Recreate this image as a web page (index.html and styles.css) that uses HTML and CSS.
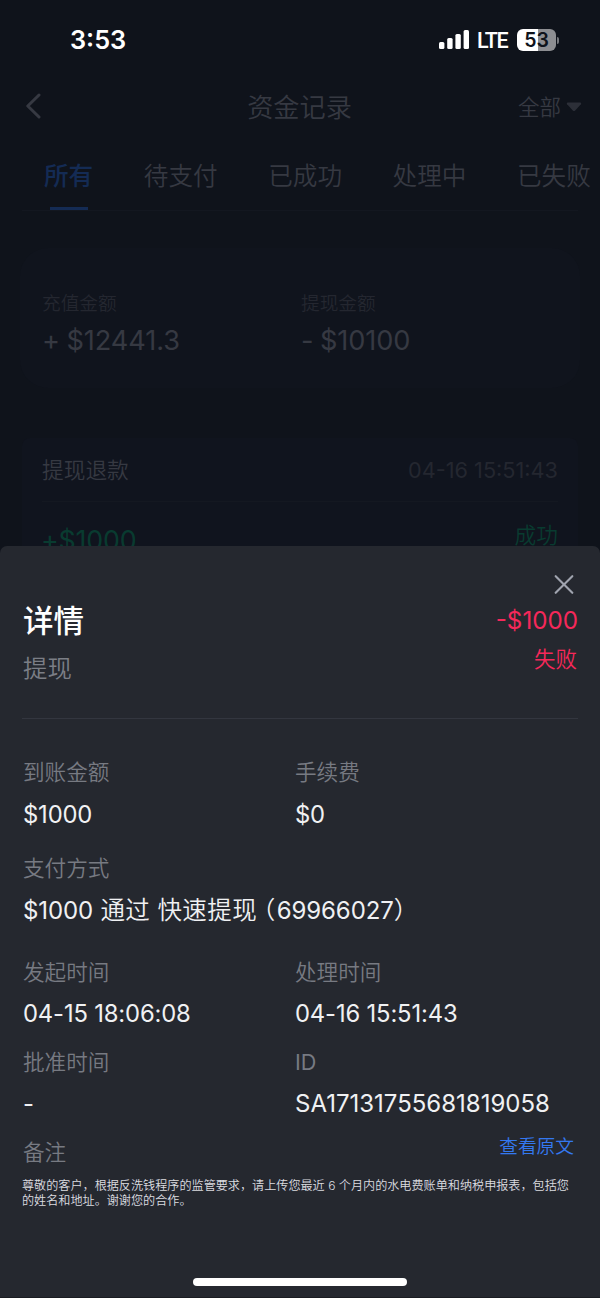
FILE: index.html
```html
<!DOCTYPE html>
<html lang="zh-CN">
<head>
  <meta charset="UTF-8">
  <meta name="viewport" content="width=device-width, initial-scale=1.0">
  <title>资金记录</title>
  <link rel="stylesheet" href="styles.css">
</head>
<body>

<div class="status-bar">
  <span class="time">3:53</span>
  <div class="status-icons">
    <svg class="signal" width="30" height="20" viewBox="0 0 30 20" fill="#fff">
      <rect x="0" y="12" width="5.4" height="7" rx="1.5"/>
      <rect x="8.2" y="8" width="5.4" height="11" rx="1.5"/>
      <rect x="16.4" y="4" width="5.4" height="15" rx="1.5"/>
      <rect x="24.6" y="0" width="5.4" height="19" rx="1.5"/>
    </svg>
    <span class="network">LTE</span>
    <span class="battery">53</span>
    <span class="battery-tip"></span>
  </div>
</div>

<div class="page">
  <div class="nav">
    <svg width="17" height="26" viewBox="0 0 17 26" fill="none" stroke="#363942" stroke-width="3" stroke-linecap="round" stroke-linejoin="round">
      <path d="M15 2L3.8 13L15 24"/>
    </svg>
    <h1>资金记录</h1>
    <div class="filter">全部
      <svg width="16" height="10" viewBox="0 0 16 10" fill="#2c2f38"><path d="M1.8 0.5H14.2Q16 0.7 14.9 2.2L9.2 8.6Q8 9.6 6.8 8.6L1.1 2.2Q0 0.7 1.8 0.5Z"/></svg>
    </div>
  </div>

  <div class="tabs">
    <span class="tab active">所有</span>
    <span class="tab">待支付</span>
    <span class="tab">已成功</span>
    <span class="tab">处理中</span>
    <span class="tab">已失败</span>
  </div>

  <div class="summary">
    <div>
      <p class="summary-label">充值金额</p>
      <p class="summary-value">+ $12441.3</p>
    </div>
    <div>
      <p class="summary-label">提现金额</p>
      <p class="summary-value">- $10100</p>
    </div>
  </div>

  <div class="record">
    <div class="record-head">
      <span>提现退款</span>
      <span class="record-time">04-16 15:51:43</span>
    </div>
    <div class="record-body">
      <span class="record-amount">+$1000</span>
      <span class="record-status">成功</span>
    </div>
  </div>
</div>

<div class="sheet">
  <div class="close">
    <svg width="20" height="20" viewBox="0 0 20 20" fill="none" stroke="#a0a4af" stroke-width="2.1" stroke-linecap="round"><path d="M1.7 1.2L18.3 17.8M18.3 1.2L1.7 17.8"/></svg>
  </div>
  <div class="sheet-head">
    <div>
      <h2>详情</h2>
      <p class="type">提现</p>
    </div>
    <div class="result">
      <p class="amount">-$1000</p>
      <p class="state">失败</p>
    </div>
  </div>

  <div class="row row-amount">
    <div>
      <p class="label">到账金额</p>
      <p class="value">$1000</p>
    </div>
    <div>
      <p class="label">手续费</p>
      <p class="value">$0</p>
    </div>
  </div>
  <div class="row row-method">
    <div class="full">
      <p class="label">支付方式</p>
      <p class="value method"><span class="num">$1000</span> 通过 快速提现<span class="paren">（</span><span class="num">69966027</span><span class="paren-close">）</span></p>
    </div>
  </div>
  <div class="row row-time">
    <div>
      <p class="label">发起时间</p>
      <p class="value">04-15 18:06:08</p>
    </div>
    <div>
      <p class="label">处理时间</p>
      <p class="value">04-16 15:51:43</p>
    </div>
  </div>
  <div class="row row-id">
    <div>
      <p class="label">批准时间</p>
      <p class="value">-</p>
    </div>
    <div>
      <p class="label num">ID</p>
      <p class="value id">SA17131755681819058</p>
    </div>
  </div>
  <div class="note-head">
    <p class="label">备注</p>
    <a class="link">查看原文</a>
  </div>
  <p class="note">尊敬的客户，根据反洗钱程序的监管要求，请上传您最近 6 个月内的水电费账单和纳税申报表，包括您的姓名和地址。谢谢您的合作。</p>
  <div class="home-indicator"></div>
</div>

</body>
</html>
```
FILE: styles.css
```css
* {
  box-sizing: border-box;
}

body {
  margin: 0;
  height: 1298px;
  position: relative;
  overflow: hidden;
  background-color: #0f131b;
  color: #363942;
  font-family: Inter, "Noto Sans CJK SC", sans-serif;
  font-weight: 350;
}

h1, h2, p {
  margin: 0;
}

svg {
  display: block;
}

.status-bar {
  height: 80px;
  padding: 0 41px 0 70px;
  display: flex;
  justify-content: space-between;
  align-items: center;
  color: #fff;
}

.time {
  margin-top: -1px;
  font-size: 25.3px;
  font-weight: 600;
}

.status-icons {
  display: flex;
  align-items: center;
}

.network {
  margin-left: 8px;
  width: 32px;
  font-family: Roboto, sans-serif;
  font-size: 21.5px;
  font-weight: 500;
  letter-spacing: -1.3px;
}

.battery {
  margin-left: 8px;
  width: 39px;
  height: 22px;
  line-height: 22px;
  border-radius: 6px;
  background: linear-gradient(to right, #fff 54%, #8d8e92 54%);
  color: #0f131b;
  text-align: center;
  font-size: 19.5px;
  font-weight: 600;
}

.battery-tip {
  margin-left: 1px;
  width: 2px;
  height: 7px;
  border-radius: 0 2px 2px 0;
  background-color: #77797e;
}

.nav {
  height: 54px;
  padding: 0 18px 0 24px;
  display: grid;
  grid-template-columns: 100px 1fr 107px;
  align-items: center;
}

.nav svg {
  margin-top: -2px;
}

.nav h1 {
  margin-top: -2px;
  text-align: center;
  font-size: 26.2px;
  font-weight: 350;
}

.filter {
  margin-top: -3px;
  display: flex;
  align-items: center;
  justify-content: flex-end;
  gap: 5px;
  font-size: 21.5px;
}

.filter svg {
  margin-top: 3px;
}

.tabs {
  height: 77px;
  margin: 0 22px;
  padding-left: 22px;
  display: flex;
  gap: 50.6px;
  border-bottom: 1px solid #131720;
  white-space: nowrap;
}

.tab {
  height: 76px;
  line-height: 84px;
  font-size: 24.6px;
}

.active {
  color: #142b54;
  font-weight: 500;
  display: flex;
  flex-direction: column;
  align-items: center;
}

.active::after {
  content: "";
  width: 38px;
  height: 3px;
  margin-top: -11px;
  background-color: #142b54;
}

.summary {
  height: 140px;
  margin: 37px 20px 0;
  padding: 43px 22px 0;
  display: grid;
  grid-template-columns: 259px 1fr;
  border-radius: 28px;
  background-color: #10141d;
}

.summary-label {
  line-height: 26px;
  font-size: 18.7px;
  color: #242730;
}

.summary-value {
  margin-top: 6px;
  line-height: 36px;
  font-size: 27.2px;
  font-weight: 400;
  letter-spacing: -0.1px;
  word-spacing: -1px;
}

.record {
  height: 160px;
  margin: 50px 22px 0;
  padding: 0 20px;
  border-radius: 8px;
  background-color: #10141e;
}

.record-head {
  height: 64px;
  padding-bottom: 2px;
  display: flex;
  justify-content: space-between;
  align-items: center;
  border-bottom: 1px solid #141821;
  font-size: 21.7px;
}

.record-time {
  margin-top: 2px;
  color: #242730;
  font-weight: 400;
}

.record-body {
  padding-top: 17px;
  display: flex;
  justify-content: space-between;
  color: #093b30;
}

.record-amount {
  margin-left: -1px;
  line-height: 42px;
  font-size: 26.8px;
  font-weight: 400;
  letter-spacing: -0.2px;
}

.record-status {
  line-height: 32px;
  font-size: 21.7px;
}

/* bottom sheet over the dimmed page */
.sheet {
  position: absolute;
  left: 0;
  right: 0;
  bottom: 0;
  height: 752px;
  padding: 28px 22px 0;
  border-radius: 7px 7px 0 0;
  border-bottom: 1px solid #1a1c22;
  background-color: #25282f;
}

.close {
  display: flex;
  justify-content: flex-end;
  padding-right: 4px;
}

.close svg {
  margin-top: 1px;
}

.sheet-head {
  height: 124px;
  padding-left: 1px;
  display: flex;
  justify-content: space-between;
  border-bottom: 1px solid #33363f;
}

.sheet-head h2 {
  margin-top: 4px;
  line-height: 44px;
  font-size: 30.5px;
  font-weight: 500;
  color: #fff;
}

.type {
  margin-top: 8px;
  line-height: 34px;
  font-size: 24.4px;
  color: #7b7e86;
}

.result {
  text-align: right;
  color: #f6285a;
}

.amount {
  margin-top: 9px;
  line-height: 34px;
  font-size: 24.2px;
  font-weight: 400;
}

.state {
  margin-top: 6px;
  padding-right: 1px;
  line-height: 30px;
  font-size: 21.5px;
}

.row {
  padding-left: 1px;
  display: grid;
  grid-template-columns: 272px 1fr;
}

.full {
  grid-column: span 2;
}

.row-amount {
  margin-top: 38px;
}

.row-method {
  margin-top: 21px;
}

.row-time {
  margin-top: 29px;
}

.row-id {
  margin-top: 16px;
}

.label {
  line-height: 30px;
  font-size: 21.6px;
  color: #777a82;
}

.value {
  margin-top: 11px;
  line-height: 34px;
  font-size: 23.8px;
  font-weight: 400;
  letter-spacing: -0.15px;
  color: #f0f1f3;
}

.row-time .value, .row-id .value {
  margin-top: 10px;
}

.row-id .id {
  font-size: 24px;
  letter-spacing: 0;
}

.num {
  font-weight: 400;
}

.row-method .method {
  margin-top: 10px;
  font-size: 24.5px;
  font-weight: 350;
  letter-spacing: 0.4px;
}

.method .num {
  font-size: 24px;
  letter-spacing: -0.1px;
}

/* half-width brackets */
.paren, .paren-close {
  font-feature-settings: "halt";
}

.paren {
  margin-left: 6px;
  margin-right: 1px;
}

.note-head {
  margin-top: 16px;
  padding-left: 1px;
  display: flex;
  justify-content: space-between;
}

.link {
  padding-right: 4px;
  line-height: 20px;
  font-size: 18.7px;
  color: #3478f0;
}

.note {
  margin-top: 12px;
  line-height: 14.5px;
  font-size: 12.12px;
  color: #dcdde0;
}

.home-indicator {
  width: 214px;
  height: 8px;
  margin: 70px auto 0;
  border-radius: 4px;
  background-color: #fff;
}
```
